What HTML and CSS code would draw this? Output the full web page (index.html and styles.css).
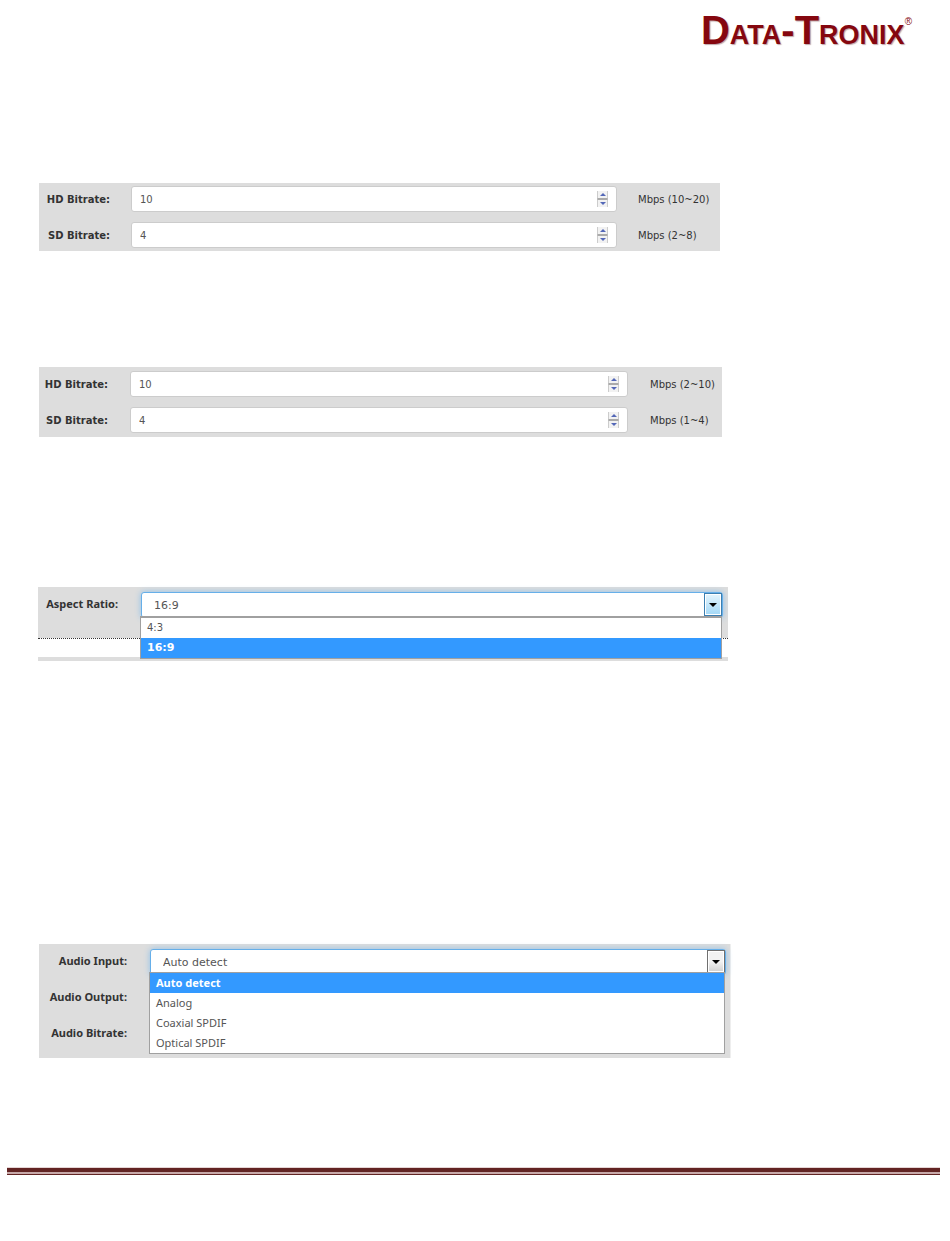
FILE: index.html
```
<!DOCTYPE html>
<html lang="en">
<head>
    <meta charset="utf-8">
    <title>Data-Tronix</title>
    <link rel="stylesheet" href="styles.css">
</head>

<body>
    <header class="header">
        <div class="logo">D<span class="small">ATA</span>-T<span class="small">RONIX</span><sup>®</sup></div>
    </header>

    <main>
        <form class="panel bitrate high">
            <div class="row">
                <label for="hd1">HD Bitrate:</label>
                <div class="number">
                    <input type="number" id="hd1" value="10" min="10" max="20">
                    <div class="spinner">
                        <button type="button" class="up" aria-label="Increase"></button>
                        <button type="button" class="down" aria-label="Decrease"></button>
                    </div>
                </div>
                <span>Mbps (10~20)</span>
            </div>
            <div class="row">
                <label for="sd1">SD Bitrate:</label>
                <div class="number">
                    <input type="number" id="sd1" value="4" min="2" max="8">
                    <div class="spinner">
                        <button type="button" class="up" aria-label="Increase"></button>
                        <button type="button" class="down" aria-label="Decrease"></button>
                    </div>
                </div>
                <span>Mbps (2~8)</span>
            </div>
        </form>

        <form class="panel bitrate low">
            <div class="row">
                <label for="hd2">HD Bitrate:</label>
                <div class="number">
                    <input type="number" id="hd2" value="10" min="2" max="10">
                    <div class="spinner">
                        <button type="button" class="up" aria-label="Increase"></button>
                        <button type="button" class="down" aria-label="Decrease"></button>
                    </div>
                </div>
                <span>Mbps (2~10)</span>
            </div>
            <div class="row">
                <label for="sd2">SD Bitrate:</label>
                <div class="number">
                    <input type="number" id="sd2" value="4" min="1" max="4">
                    <div class="spinner">
                        <button type="button" class="up" aria-label="Increase"></button>
                        <button type="button" class="down" aria-label="Decrease"></button>
                    </div>
                </div>
                <span>Mbps (1~4)</span>
            </div>
        </form>

        <form class="panel aspect">
            <div class="row">
                <label for="ratio">Aspect Ratio:</label>
                <div class="dropdown">
                    <select id="ratio">
                        <option>4:3</option>
                        <option selected>16:9</option>
                    </select>
                    <span class="arrow hover"></span>
                    <ul class="menu">
                        <li>4:3</li>
                        <li class="selected">16:9</li>
                    </ul>
                </div>
            </div>
            <div class="next-row"></div>
        </form>

        <form class="panel audio">
            <div class="row">
                <label for="input">Audio Input:</label>
                <div class="dropdown">
                    <select id="input">
                        <option selected>Auto detect</option>
                        <option>Analog</option>
                        <option>Coaxial SPDIF</option>
                        <option>Optical SPDIF</option>
                    </select>
                    <span class="arrow"></span>
                    <ul class="menu">
                        <li class="selected">Auto detect</li>
                        <li>Analog</li>
                        <li>Coaxial SPDIF</li>
                        <li>Optical SPDIF</li>
                    </ul>
                </div>
            </div>
            <div class="row"><span class="name">Audio Output:</span></div>
            <div class="row"><span class="name">Audio Bitrate:</span></div>
        </form>
    </main>

    <footer class="footer"></footer>
</body>
</html>
```
FILE: styles.css
```
*, ::after, ::before {
    box-sizing: border-box;
    margin: 0;
    padding: 0;
}

body {
    background: #fff;
    color: #333;
    font-family: "DejaVu Sans", Verdana, sans-serif;
    font-size: 10px;
}

.header {
    display: flex;
    justify-content: flex-end;
    height: 183px;
    padding: 7px 38px 0 0;
}

.logo {
    color: #85070f;
    font: bold 40px/46px "Liberation Sans", Arial, sans-serif;
    text-shadow: 1px 1px 1px #80505480;
    white-space: nowrap;
}

.logo .small {
    font-size: 27px;
}

.logo sup {
    font-size: 10px;
    line-height: 10px;
    font-weight: normal;
    vertical-align: 19px;
    text-shadow: none;
}

/* panels */
.panel {
    background: #ddd;
    margin-left: 39px;
}

.row {
    display: grid;
    grid-template-columns: 71px 1fr 82px;
    column-gap: 21px;
    align-items: center;
    height: 26px;
}

.row label, .name {
    font-weight: bold;
    text-align: right;
    white-space: nowrap;
}

.bitrate {
    display: grid;
    row-gap: 10px;
    padding: 3px 0;
}

.high {
    margin-right: 230px;
    margin-bottom: 116px;
}

.low {
    margin-right: 228px;
    margin-bottom: 150px;
    padding: 4px 0;
}

.low .row {
    grid-template-columns: 69px 1fr 72px;
    column-gap: 22px;
}

/* number boxes */
.number {
    display: flex;
    align-items: center;
    height: 26px;
    padding: 0 8px;
    background: #fff;
    border: 1px solid #ccc;
    border-radius: 3px;
}

.number input {
    flex: 1;
    min-width: 0;
    border: 0;
    outline: 0;
    background: none;
    color: #555;
    font: 10px "DejaVu Sans", Verdana, sans-serif;
    appearance: textfield;
}

.number input::-webkit-inner-spin-button {
    display: none;
}

.spinner {
    width: 11px;
}

.spinner button {
    display: flex;
    align-items: center;
    justify-content: center;
    width: 11px;
    height: 8px;
    border: 1px solid #ccc;
    border-width: 0 1px;
    background: #f2f2f2;
}

.spinner .up {
    border-bottom: 1px solid #aaa;
}

.spinner .down {
    border-top: 1px solid #aaa;
}

.spinner button::before {
    content: "";
    border: 3px solid transparent;
    border-top: 0;
    border-bottom-color: #5468b8;
}

.spinner .down::before {
    border-top: 3px solid #5468b8;
    border-bottom: 0;
}

/* drop-downs */
.aspect, .audio {
    font-family: "Noto Sans", Tahoma, sans-serif;
    font-size: 11px;
}

.aspect label, .audio label, .audio .name {
    padding: 0 1px 3px 0;
}

.dropdown {
    position: relative;
}

.dropdown select {
    display: block;
    width: 100%;
    height: 26px;
    padding: 0 12px;
    appearance: none;
    border: 1px solid #66afe9;
    border-radius: 3px;
    background: #fff;
    box-shadow: 0 0 6px #8fc0e8;
    color: #555;
    font: 11px "DejaVu Sans", Verdana, sans-serif;
}

.arrow {
    position: absolute;
    top: 1px;
    right: 1px;
    display: flex;
    align-items: center;
    justify-content: center;
    width: 18px;
    height: 23px;
    border: 1px solid #707070;
    background: linear-gradient(#f2f2f2 50%, #d0d0d0);
    box-shadow: inset 0 0 0 1px #fff;
    pointer-events: none;
}

.arrow.hover {
    border-color: #3c7fb1;
    background: linear-gradient(#e5f5fd, #a2d8f7);
}

.arrow::before {
    content: "";
    border: 4px solid transparent;
    border-top-color: #000;
    border-bottom: 0;
}

.menu {
    position: absolute;
    top: 24px;
    left: -1px;
    right: 1px;
    border: 1px solid #a0a0a0;
    background: #fff;
    color: #555;
    list-style: none;
}

.menu li {
    height: 20px;
    padding-left: 6px;
    line-height: 20px;
}

.menu .selected {
    background: #39f;
    color: #fff;
    font-weight: bold;
}

.aspect {
    margin-left: 38px;
    margin-right: 222px;
    margin-bottom: 283px;
    padding: 5px 0 4px;
}

.aspect .row {
    grid-template-columns: 81px 1fr;
    column-gap: 22px;
    margin-right: 5px;
}

.aspect .menu {
    border-top-width: 2px;
    font: 10px "DejaVu Sans", Verdana, sans-serif;
}

.aspect .menu .selected {
    font-size: 11px;
}

.next-row {
    height: 19px;
    margin-top: 20px;
    background: #fff;
    border-top: 1px dotted #333;
}

.audio {
    display: grid;
    row-gap: 10px;
    margin-right: 219px;
    padding: 5px 0 11px;
    border-right: 1px solid #eee;
}

.audio .row {
    grid-template-columns: 89px 1fr;
    column-gap: 22px;
    margin-right: 4px;
}

.audio .menu {
    top: 23px;
}

.footer {
    height: 8px;
    margin: 109px 10px 66px 7px;
    background: #622423;
    border-top: 1px solid #e5d5d5;
}

.footer::before {
    content: "";
    display: block;
    height: 6px;
    border-bottom: 2px solid #c8a9a9;
}
```
